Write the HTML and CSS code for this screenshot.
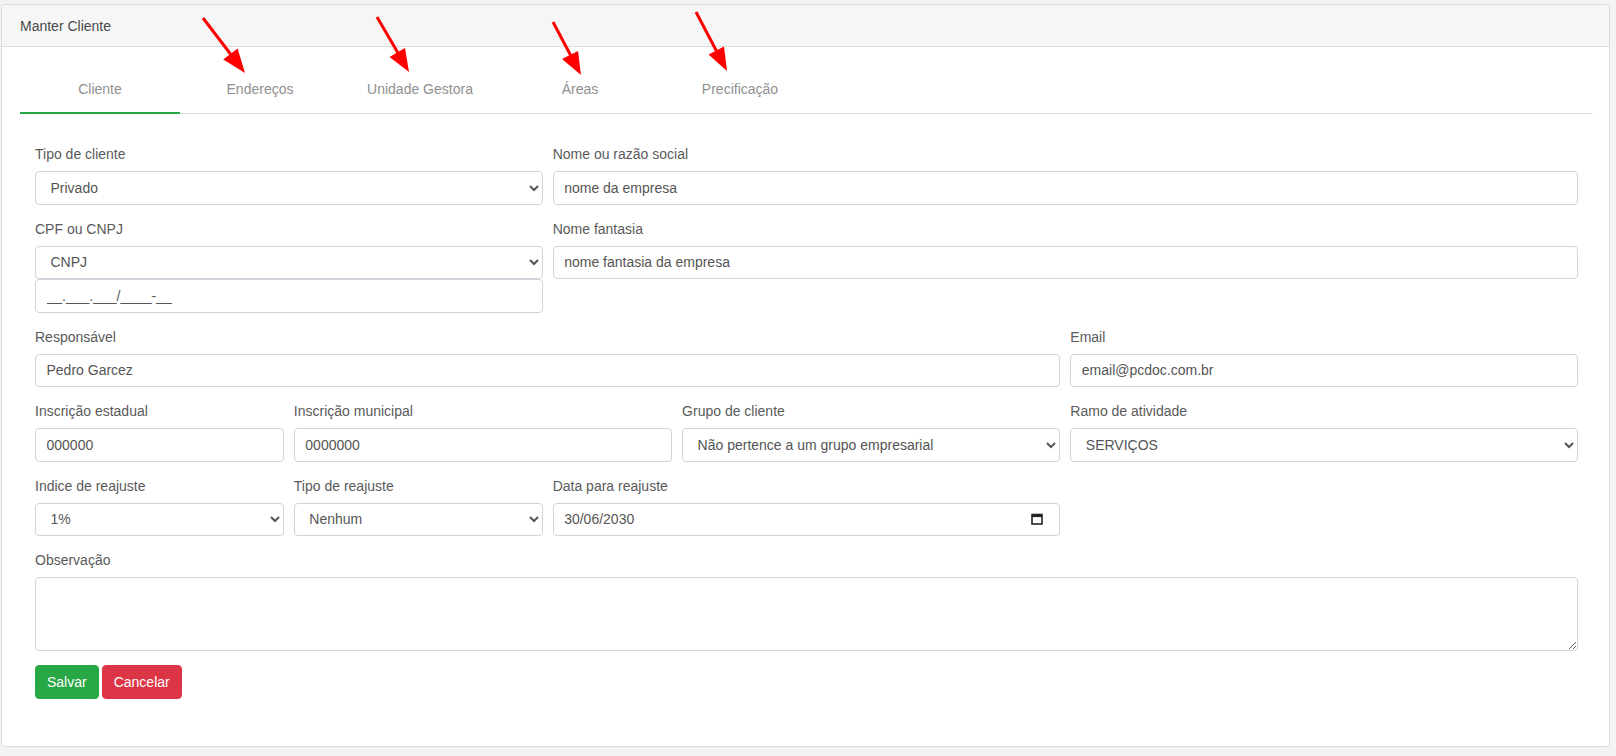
FILE: index.html
```html
<!DOCTYPE html>
<html lang="pt-BR">
<head>
<meta charset="utf-8">
<title>Manter Cliente</title>
<link rel="stylesheet" href="styles.css">
</head>
<body>
<div class="card">
  <div class="card-header">Manter Cliente</div>
  <div class="card-body">
    <nav class="tabs">
      <a class="tab active">Cliente</a>
      <a class="tab">Endereços</a>
      <a class="tab">Unidade Gestora</a>
      <a class="tab">Áreas</a>
      <a class="tab">Precificação</a>
    </nav>
    <form class="form">
      <div class="row">
        <div class="group span-4">
          <label class="label">Tipo de cliente</label>
          <select class="control select"><option>Privado</option></select>
        </div>
        <div class="group span-8">
          <label class="label">Nome ou razão social</label>
          <input class="control" type="text" value="nome da empresa">
        </div>
      </div>
      <div class="row">
        <div class="group span-4">
          <label class="label">CPF ou CNPJ</label>
          <select class="control select"><option>CNPJ</option></select>
          <input class="control" type="text" value="__.___.___/____-__">
        </div>
        <div class="group span-8">
          <label class="label">Nome fantasia</label>
          <input class="control" type="text" value="nome fantasia da empresa">
        </div>
      </div>
      <div class="row">
        <div class="group span-8">
          <label class="label">Responsável</label>
          <input class="control" type="text" value="Pedro Garcez">
        </div>
        <div class="group span-4">
          <label class="label">Email</label>
          <input class="control" type="text" value="email@pcdoc.com.br">
        </div>
      </div>
      <div class="row">
        <div class="group span-2">
          <label class="label">Inscrição estadual</label>
          <input class="control" type="text" value="000000">
        </div>
        <div class="group span-3">
          <label class="label">Inscrição municipal</label>
          <input class="control" type="text" value="0000000">
        </div>
        <div class="group span-3">
          <label class="label">Grupo de cliente</label>
          <select class="control select"><option>Não pertence a um grupo empresarial</option></select>
        </div>
        <div class="group span-4">
          <label class="label">Ramo de atividade</label>
          <select class="control select"><option>SERVIÇOS</option></select>
        </div>
      </div>
      <div class="row">
        <div class="group span-2">
          <label class="label">Indice de reajuste</label>
          <select class="control select"><option>1%</option></select>
        </div>
        <div class="group span-2">
          <label class="label">Tipo de reajuste</label>
          <select class="control select"><option>Nenhum</option></select>
        </div>
        <div class="group span-4">
          <label class="label">Data para reajuste</label>
          <div class="control date">
            <span>30/06/2030</span>
            <svg class="cal" width="12" height="12" viewBox="0 0 12 12"><rect x="1" y="1.5" width="10" height="9.5" fill="none" stroke="#222" stroke-width="1.6"/><rect x="1" y="1.5" width="10" height="2.6" fill="#222"/></svg>
          </div>
        </div>
      </div>
      <div class="row">
        <div class="group span-12">
          <label class="label">Observação</label>
          <textarea class="control textarea"></textarea>
        </div>
      </div>
      <div class="actions">
        <button type="button" class="btn btn-success">Salvar</button>
        <button type="button" class="btn btn-danger">Cancelar</button>
      </div>
    </form>
  </div>
</div>
<svg class="arrows" width="1616" height="756" viewBox="0 0 1616 756">
  <g stroke="#ff0000" stroke-width="3" fill="#ff0000">
    <line x1="203" y1="18" x2="232" y2="56"/>
    <polygon points="245,73 223.2,59.4 237.6,48.4" stroke="none"/>
    <line x1="377" y1="17" x2="398" y2="53"/>
    <polygon points="409,72 389.5,57 405,48" stroke="none"/>
    <line x1="553" y1="22" x2="571" y2="56"/>
    <polygon points="581,75 562,59 578,51" stroke="none"/>
    <line x1="696" y1="12" x2="717" y2="52"/>
    <polygon points="727,71 708.5,54.5 724,46.5" stroke="none"/>
  </g>
</svg>
</body>
</html>
```

FILE: styles.css
```css
* { box-sizing: border-box; }

html, body {
  margin: 0;
  height: 100%;
}

body {
  position: relative;
  background: #f3f3f3;
  padding: 4px 6px 0 1px;
  font-family: "Liberation Sans", Arial, sans-serif;
  font-size: 14px;
  color: #555;
}

.card {
  background: #fff;
  border: 1px solid #dcdcdc;
  border-radius: 4px;
}

.card-header {
  background: #f6f6f6;
  border-bottom: 1px solid #dcdcdc;
  border-radius: 4px 4px 0 0;
  padding: 11px 18px 10px;
  line-height: 20px;
  color: #4a4a4a;
}

.card-body {
  padding: 20px 16px 0 18px;
}

.tabs {
  display: flex;
  border-bottom: 1px solid #dee2e6;
}

.tab {
  width: 160px;
  text-align: center;
  line-height: 20px;
  padding: 12px 0 13px;
  border-bottom: 2px solid transparent;
  margin-bottom: -1px;
  color: #909090;
}

.tab.active {
  border-bottom-color: #28a745;
}

.form {
  padding: 30px 15px 47px;
}

.row {
  display: grid;
  grid-template-columns: repeat(12, 1fr);
  column-gap: 10px;
}

.group {
  margin-bottom: 14px;
  min-width: 0;
}

.span-2 { grid-column: span 2; }
.span-3 { grid-column: span 3; }
.span-4 { grid-column: span 4; }
.span-8 { grid-column: span 8; }
.span-12 { grid-column: span 12; }

.label {
  display: block;
  line-height: 20px;
  margin-bottom: 7px;
  color: #5a5a5a;
}

.control {
  display: block;
  width: 100%;
  height: 33.5px;
  padding: 0 10.5px;
  border: 1px solid #ced4da;
  border-radius: 4px;
  background: #fff;
  font-family: inherit;
  font-size: 14px;
  color: #555;
  outline: none;
}

.select {
  padding-right: 8px;
}

.date {
  display: flex;
  align-items: center;
  justify-content: space-between;
  padding-right: 16px;
}

.cal { display: block; }

.textarea {
  height: 74px;
  padding: 6px 10.5px;
  resize: vertical;
}

.actions {
  display: flex;
  gap: 3px;
}

.btn {
  height: 34px;
  padding: 0 11px;
  border: 1px solid transparent;
  border-radius: 4px;
  font-family: inherit;
  font-size: 14px;
  color: #fff;
}

.btn-success { background: #28a745; border-color: #28a745; }
.btn-danger { background: #dc3545; border-color: #dc3545; }

.arrows {
  position: absolute;
  left: 0;
  top: 0;
  pointer-events: none;
}
```
